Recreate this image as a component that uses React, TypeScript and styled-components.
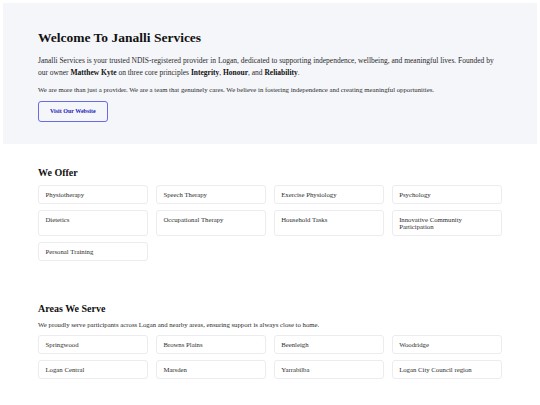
import React from 'react';
import styled, { createGlobalStyle } from 'styled-components';

const GlobalStyle = createGlobalStyle`
    body {
        margin: 3px;
        background: #ffffff;
        font-family: 'Liberation Serif', 'Times New Roman', serif;
        color: #222222;
    }
`;

const Hero = styled.section`
    background-color: #f5f6fa;
    padding: 26px 35px 22px 35px;
`;

const HeroTitle = styled.h1`
    margin: 0;
    font-size: 13.5px;
    line-height: 18px;
    font-weight: 700;
    color: #111111;
`;

const HeroText = styled.p<{ $small?: boolean }>`
    margin: ${(p) => (p.$small ? '5px 0 0 0' : '8px 0 0 0')};
    font-size: ${(p) => (p.$small ? '6.75px' : '7.5px')};
    line-height: 12px;
    color: #2a2a2a;

    strong {
        color: #111111;
    }
`;

const VisitButton = styled.a`
    display: inline-block;
    margin-top: 5px;
    padding: 6px 11px;
    border: 1px solid #6a6ae6;
    border-radius: 3px;
    font-size: 6px;
    line-height: 7px;
    font-weight: 700;
    color: #2323b8;
    text-decoration: none;
`;

const Section = styled.section`
    padding: 23px 35px 19px 35px;
`;

const SectionTitle = styled.h2`
    margin: 0;
    font-size: 10px;
    line-height: 12px;
    font-weight: 700;
    color: #111111;
`;

const SectionText = styled.p`
    margin: 5px 0 0 0;
    font-size: 6.75px;
    line-height: 9px;
    color: #2a2a2a;
`;

const CardGrid = styled.ul`
    list-style: none;
    margin: 6px 0 0 0;
    padding: 0;
    display: grid;
    grid-template-columns: repeat(4, 1fr);
    column-gap: 7.5px;
    row-gap: 5.5px;
`;

const Card = styled.li`
    background: #ffffff;
    border: 1px solid #ececf0;
    border-radius: 3px;
    padding: 4.9px 6.5px;
    font-size: 6.75px;
    line-height: 7.4px;
    color: #2e2e2e;
`;

const offers = [
    'Physiotherapy',
    'Speech Therapy',
    'Exercise Physiology',
    'Psychology',
    'Dietetics',
    'Occupational Therapy',
    'Household Tasks',
    'Innovative Community Participation',
    'Personal Training',
];

const areas = [
    'Springwood',
    'Browns Plains',
    'Beenleigh',
    'Woodridge',
    'Logan Central',
    'Marsden',
    'Yarrabilba',
    'Logan City Council region',
];

export default function App() {
    return (
        <>
            <GlobalStyle />
            <Hero>
                <HeroTitle>Welcome To Janalli Services</HeroTitle>
                <HeroText>
                    Janalli Services is your trusted NDIS-registered provider in Logan, dedicated to supporting
                    independence, wellbeing, and meaningful lives. Founded by our owner <strong>Matthew Kyte</strong> on
                    three core principles <strong>Integrity</strong>, <strong>Honour</strong>, and{' '}
                    <strong>Reliability</strong>.
                </HeroText>
                <HeroText $small>
                    We are more than just a provider. We are a team that genuinely cares. We believe in fostering
                    independence and creating meaningful opportunities.
                </HeroText>
                <VisitButton href="#">Visit Our Website</VisitButton>
            </Hero>
            <Section>
                <SectionTitle>We Offer</SectionTitle>
                <CardGrid>
                    {offers.map((o) => (
                        <Card key={o}>{o}</Card>
                    ))}
                </CardGrid>
            </Section>
            <Section>
                <SectionTitle>Areas We Serve</SectionTitle>
                <SectionText>
                    We proudly serve participants across Logan and nearby areas, ensuring support is always close to
                    home.
                </SectionText>
                <CardGrid>
                    {areas.map((a) => (
                        <Card key={a}>{a}</Card>
                    ))}
                </CardGrid>
            </Section>
        </>
    );
}
